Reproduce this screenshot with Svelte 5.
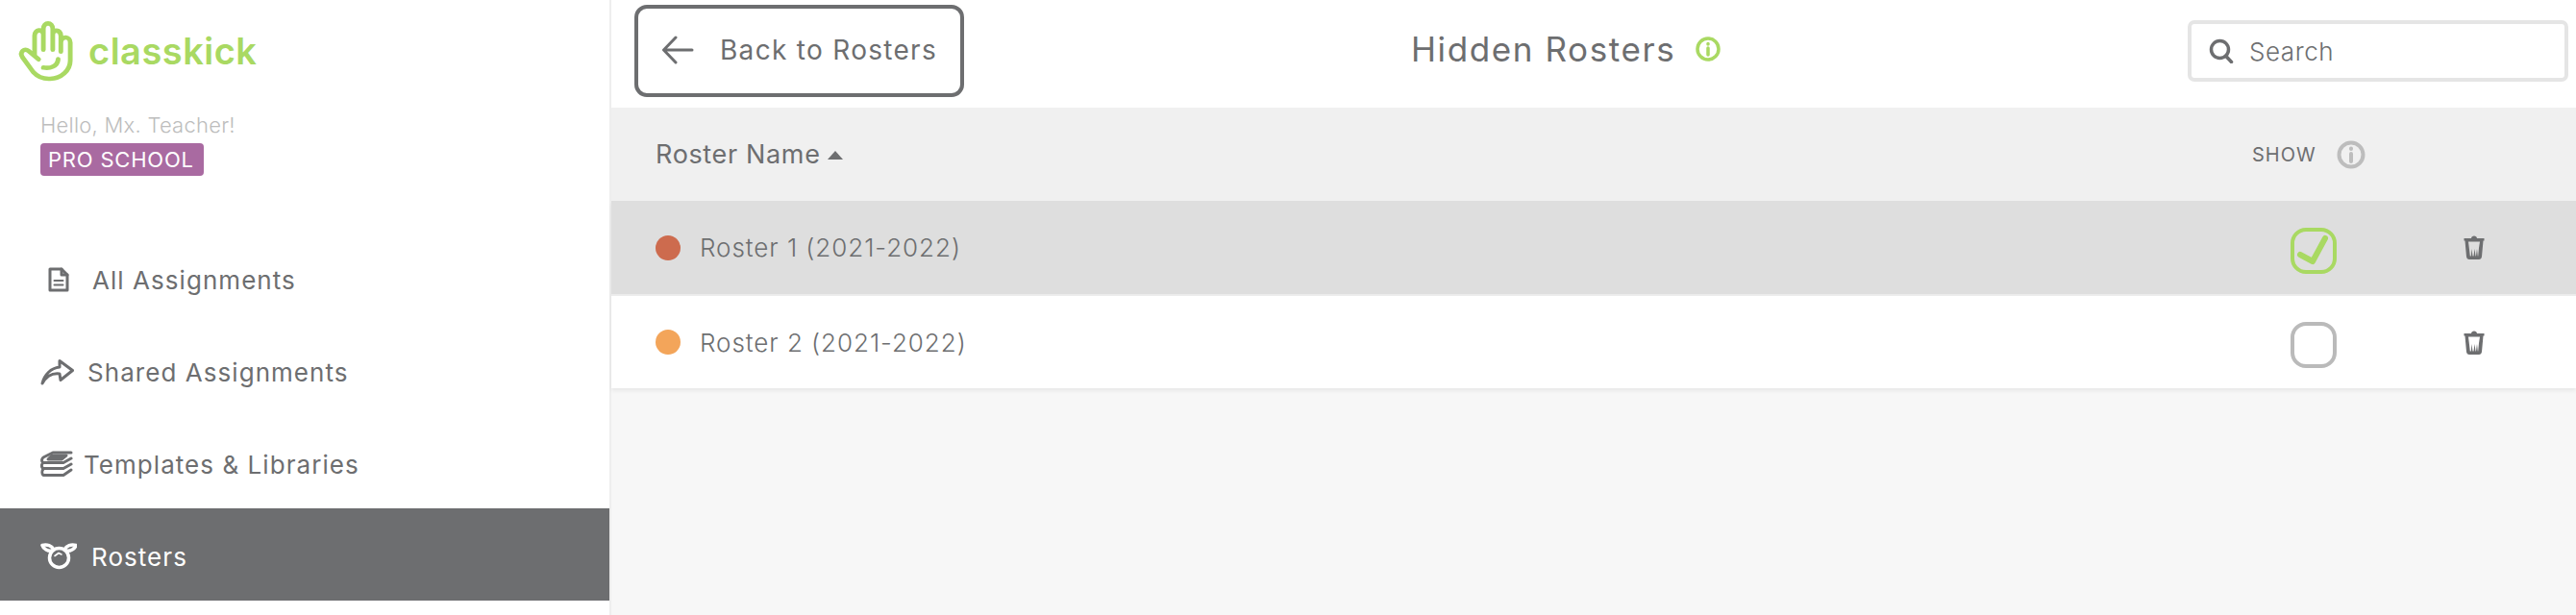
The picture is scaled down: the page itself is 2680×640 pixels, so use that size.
<script>
  const nav = [
    { label: 'All Assignments', cls: 'n-doc' },
    { label: 'Shared Assignments', cls: 'n-share' },
    { label: 'Templates & Libraries', cls: 'n-books' },
    { label: 'Rosters', cls: 'n-sheep', active: true }
  ];
  const rosters = [
    { name: 'Roster 1 (2021-2022)', color: '#cd6b4e', checked: true },
    { name: 'Roster 2 (2021-2022)', color: '#f3a55a', checked: false }
  ];
</script>

<div class="page">
  <aside class="sidebar">
    <div class="brand">
      <svg class="hand" viewBox="0 0 240 240" preserveAspectRatio="none" aria-hidden="true">
        <path d="M92 152 L62 126 C50 116 34 128 44 146 L76 192 C90 208 108 214 126 213 C160 212 186 186 186 156 L186 100 C186 80 160 78 158 98 L158 78 C156 58 134 58 134 76 L134 58 C134 34 106 34 106 58 L106 74 C104 56 80 58 80 78 L80 140 M106 60 L106 122 M134 70 L134 122 M158 92 L158 128" />
        <path d="M106 178 C126 182 148 174 150 152" />
      </svg>
      <span class="wordmark">classkick</span>
    </div>
    <div class="hello">Hello, Mx. Teacher!</div>
    <span class="badge">PRO SCHOOL</span>

    <nav class="nav">
      {#each nav as item}
        <div class="nav-item {item.cls}" class:active={item.active}>
          {#if item.cls === 'n-doc'}
            <svg class="ico" width="22" height="26" viewBox="0 0 22 26"><path d="M2 2 H14 L20 8 V24 H2 Z" /><path d="M14 2 V8 H20" /><path d="M6.5 14 H15.5 M6.5 18.5 H15.5" stroke-width="2" /></svg>
          {:else if item.cls === 'n-share'}
            <svg class="ico" width="36" height="28" viewBox="0 0 36 28"><path d="M2 26 C4 17 11 10 20 9 V2.5 L33.5 12.5 L21 22.5 L20 16 C12 15 6 19 2 26 Z" /></svg>
          {:else if item.cls === 'n-books'}
            <svg class="ico" width="34" height="28" viewBox="0 0 34 28"><path d="M32 2 H13 L3 7 C1 9 1 11 3 12.5 H24 L32 8" /><path d="M12 5 L8 9 H22 L27 5 Z" fill="#6d6e70" /><path d="M3 12.5 C0.8 14.5 0.8 17 3 18.5 H24 L32 14" /><path d="M3 19 C1.5 21 1.5 24 3 25.5 H24 L32 20" /></svg>
          {:else}
            <svg class="ico" width="38" height="28" viewBox="0 0 38 28"><circle cx="19.5" cy="15.5" r="10" /><path d="M12 8 C8 9 3 6 2 2.5 C7 1 12 3 14 7 M27 8 C31 9 36 6 37 2.5 C32 1 27 3 25 7" /><path d="M15 13.5 L19 10.5 L22 12" stroke-width="1.6" /></svg>
          {/if}
          <span>{item.label}</span>
        </div>
      {/each}
    </nav>
  </aside>

  <main class="main">
    <header class="top">
      <button class="back">
        <svg width="34" height="30" viewBox="0 0 34 30"><path d="M32 15 H3 M15 2 L2.5 15 L15 28" /></svg>
        <span>Back to Rosters</span>
      </button>
      <h1 class="title">Hidden Rosters</h1>
      <svg class="title-info" width="26" height="26" viewBox="0 0 26 26"><circle cx="13" cy="13" r="11" /><path d="M13 12 V19 M13 7.5 V8" /></svg>
      <div class="search">
        <svg width="26" height="26" viewBox="0 0 26 26"><circle cx="11.5" cy="11.5" r="9" /><path d="M17.5 18 L23.5 24.5" /></svg>
        <span>Search</span>
      </div>
    </header>

    <div class="thead">
      <div class="col-name">Roster Name <i class="caret"></i></div>
      <div class="col-show">
        <span>SHOW</span>
        <svg width="30" height="30" viewBox="0 0 30 30"><circle cx="15" cy="15" r="12.5" /><path d="M15 14 V22 M15 8.5 V9" /></svg>
      </div>
      <div class="col-del"></div>
    </div>

    <div class="rows">
      {#each rosters as r}
        <div class="row" class:selected={r.checked}>
          <div class="col-name">
            <i class="dot" style="background:{r.color}"></i>
            <span>{r.name}</span>
          </div>
          <div class="col-check">
            <div class="check" class:on={r.checked}>
              {#if r.checked}
                <svg width="40" height="40" viewBox="0 0 40 40"><path d="M6 24 L19 31 L32 7" /></svg>
              {/if}
            </div>
          </div>
          <div class="col-trash">
            <svg width="22" height="26" viewBox="0 0 22 26"><path class="solid" d="M0.500 4 H8 C8 0.500 14 0.500 14 4 H21.500 V6.500 H20.500 L19 23 C18.800 25 17.500 26 16 26 H6 C4.500 26 3.200 25 3 23 L1.500 6.500 H0.500 Z" /><path class="hole" d="M5 7.500 H17 L16 14 L15.200 22.500 H14.800 L14 15 L13 22.500 H12.500 L11.500 15 L10.500 22.500 H9.500 L8.500 15 L7.800 22.500 H6.800 L5.800 14 Z" /></svg>
          </div>
        </div>
      {/each}
    </div>
  </main>
</div>

<style>
  :global(body) { margin: 0; background: #f7f7f7; }
  .page {
    display: flex;
    height: 640px;
    overflow: hidden;
    font-family: Inter, "Liberation Sans", sans-serif;
    color: #6d6e70;
  }
  .sidebar {
    width: 634px;
    flex: none;
    display: flex;
    flex-direction: column;
    align-items: flex-start;
    background: #fff;
    border-right: 2px solid #eeeeee;
  }
  .brand { display: flex; align-items: center; padding: 14px 0 0 8px; height: 74px; }
  .hand { width: 84px; height: 80px; flex: none; }
  .hand path { fill: none; stroke: #a9d962; stroke-width: 14; stroke-linecap: round; stroke-linejoin: round; }
  .wordmark { font-size: 38px; font-weight: 600; color: #a9d962; margin: 4px 0 0 0; letter-spacing: 0.5px; }
  .hello { margin: 27px 0 0 42px; font-size: 22px; line-height: 30px; font-weight: 300; color: #bdbdbd; letter-spacing: 0.25px; }
  .badge {
    margin: 4px 0 0 42px; height: 34px; padding: 0 8px; border-radius: 4px; box-sizing: border-box;
    width: 170px; background: #a96aa1; color: #fff; font-size: 22px; line-height: 34px; white-space: nowrap; font-weight: 400; letter-spacing: 0.8px;
  }
  .nav { align-self: stretch; margin-top: 58px; display: flex; flex-direction: column; }
  .nav-item { height: 96px; display: flex; align-items: center; padding-top: 4px; box-sizing: border-box; font-size: 26px; letter-spacing: 1.05px; padding-left: 42px; }
  .ico { fill: none; stroke: #6d6e70; stroke-width: 3; stroke-linejoin: round; stroke-linecap: round; flex: none; }
  .n-doc { padding-left: 50px; gap: 24px; }
  .n-share { gap: 13px; }
  .n-books { gap: 11px; }
  .n-sheep { gap: 15px; }
  .nav-item.active { background: #6d6e70; color: #fff; }
  .nav-item.active .ico { stroke: #fff; stroke-width: 3.500; }

  .main { flex: 1; min-width: 0; display: flex; flex-direction: column; }
  .top { height: 112px; flex: none; background: #fff; display: flex; align-items: center; padding-left: 24px; padding-right: 8px; }
  .back {
    width: 343px; height: 96px; margin-top: -7px; box-sizing: border-box; border: 4px solid #6d6e70; border-radius: 13px; background: #fff;
    display: flex; align-items: center; gap: 27px; padding: 0 0 2px 24px; font: inherit; font-size: 28px; color: #6d6e70; letter-spacing: 1.3px; flex: none;
  }
  .back svg { fill: none; stroke: #6d6e70; stroke-width: 3; stroke-linecap: round; stroke-linejoin: round; }
  .title { margin: -10px 0 0 465px; font-size: 35px; line-height: 40px; font-weight: 400; letter-spacing: 1.6px; }
  .title-info { margin: -10px 0 0 21px; fill: none; stroke: #a9d962; stroke-width: 3.500; stroke-linecap: round; }
  .search {
    margin-left: auto; margin-top: -6px; width: 396px; height: 64px; box-sizing: border-box; border: 4px solid #e5e5e5; border-radius: 7px;
    display: flex; align-items: center; gap: 16px; padding-left: 18px; font-size: 26px; font-weight: 300; color: #6d6e70; letter-spacing: 0.55px;
  }
  .search svg { fill: none; stroke: #6d6e70; stroke-width: 3.500; stroke-linecap: round; }

  .thead, .row { display: grid; grid-template-columns: 1fr 160px 172px; padding-right: 20px; align-items: center; }
  .thead { height: 97px; background: #f0f0f0; flex: none; }
  .thead .col-name { padding-left: 46px; font-size: 27px; letter-spacing: 0.65px; }
  .caret { display: inline-block; width: 0; height: 0; margin-left: -1px; vertical-align: 4px; border: 8px solid transparent; border-top: 0; border-bottom: 9px solid #6d6e70; }
  .col-show { display: flex; align-items: center; gap: 21px; margin-left: 15px; font-size: 20px; font-weight: 400; letter-spacing: 1px; white-space: nowrap; }
  .col-show svg { fill: none; stroke: #bdbdbd; stroke-width: 4; stroke-linecap: round; }

  .rows { display: flex; flex-direction: column; gap: 2px; background: #ececec; box-shadow: 0 3px 4px rgba(0,0,0,0.06); }
  .row { height: 97px; background: #fff; }
  .row:last-child { height: 96px; }
  .row.selected { background: #dedede; }
  .row .col-name { display: flex; align-items: center; gap: 20px; padding-left: 46px; font-size: 26px; font-weight: 300; letter-spacing: 0.95px; }
  .dot { width: 26px; height: 26px; border-radius: 50%; flex: none; }
  .col-check, .col-trash { display: flex; justify-content: center; }
  .check { width: 48px; height: 48px; box-sizing: border-box; border: 4px solid #bababa; border-radius: 16px; margin: 6px 0 0 -2px; }
  .check.on { border-color: #a9d962; }
  .check svg { display: block; fill: none; stroke: #a9d962; stroke-width: 6; stroke-linecap: round; stroke-linejoin: round; }
  .col-trash svg { margin-top: -1px; }
  .solid { fill: #6d6e70; }
  .hole { fill: #fff; }
  .row.selected .hole { fill: #dedede; }
</style>
